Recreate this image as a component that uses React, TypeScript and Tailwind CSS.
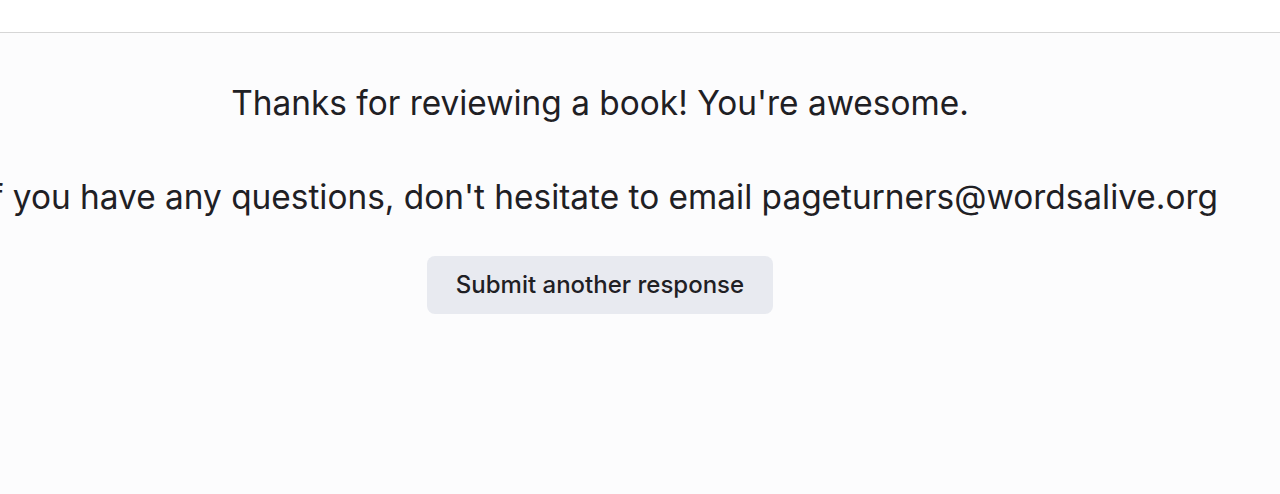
export default function App() {
  return (
    <div className="h-[494px] w-[1280px] overflow-hidden bg-[#fcfcfd] font-['Inter',sans-serif] text-[#1f2024]">
      <header className="h-[33px] border-b border-[#d6d6d6] bg-white" />
      <main className="flex w-[1200px] flex-col items-center pt-[47px]">
        <h1 className="whitespace-nowrap text-[33.4px] leading-[46px]">Thanks for reviewing a book! You're awesome.</h1>
        <p className="mt-[48px] whitespace-nowrap text-[33.4px] leading-[46px]">
          If you have any questions, don't hesitate to email pageturners@wordsalive.org
        </p>
        <button className="mt-[36px] h-[58px] w-[346px] rounded-lg bg-[#e8eaf0] text-[24px] font-medium">
          Submit another response
        </button>
      </main>
    </div>
  );
}
